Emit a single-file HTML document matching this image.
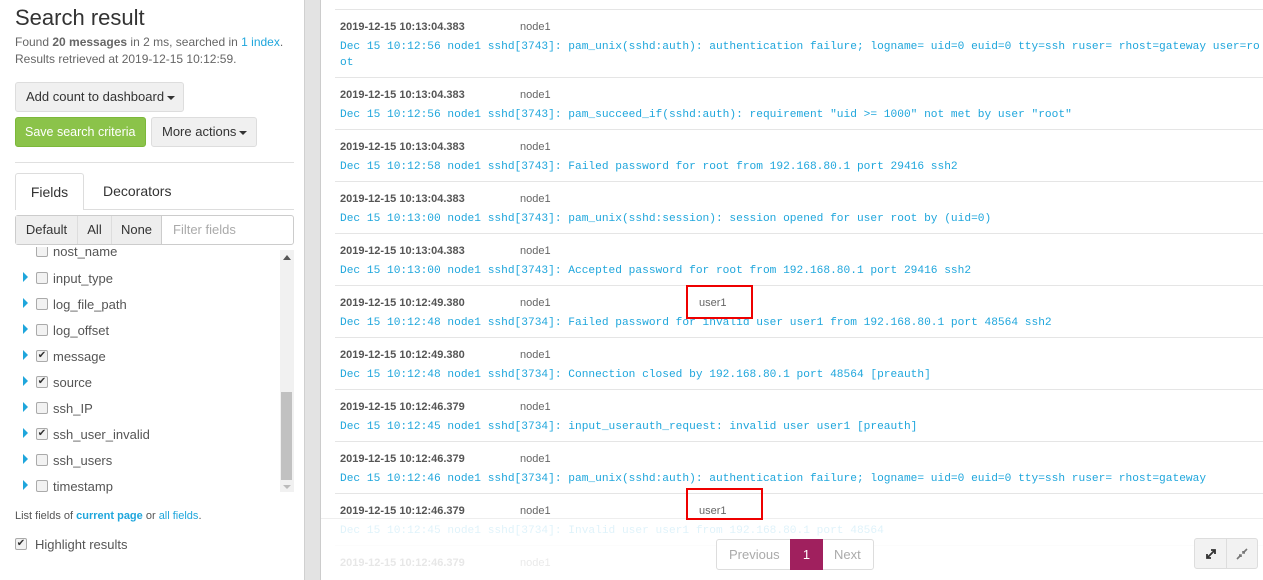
<!DOCTYPE html>
<html style="width:1263px;height:580px;overflow:hidden"><head><meta charset="utf-8"><style>
*{box-sizing:border-box;margin:0;padding:0}
body{width:1263px;height:580px;overflow:hidden;background:#e3e3e3;font-family:"Liberation Sans",sans-serif;color:#666;position:relative}
#left{position:absolute;left:0;top:0;width:305px;height:580px;background:#fff;border-right:1px solid #d0d0d0}
#right{position:absolute;left:320px;top:0;width:943px;height:580px;background:#fff;border-left:1px solid #ccc;overflow:hidden}
.a{position:absolute}
h1{position:absolute;left:15px;top:5px;font-size:22px;font-weight:normal;color:#333}
.btn{position:absolute;border:1px solid #ddd;background:#f0f0f0;border-radius:3px;font-size:13px;color:#333;padding:0 10px;line-height:28px;height:30px;white-space:nowrap}
.car{display:inline-block;border-top:4px solid #333;border-left:4px solid transparent;border-right:4px solid transparent;vertical-align:middle;margin-left:3px}
.fld{position:absolute;left:0;font-size:13px;color:#555}
.tri{position:absolute;left:23px;width:0;height:0;border-left:5px solid #1fa6dc;border-top:5px solid transparent;border-bottom:5px solid transparent}
.cb{position:absolute;left:36px;width:12px;height:12px;border:1px solid #aaa;border-radius:2px;background:#f2f2f2;font-size:10px;line-height:10px;color:#333;text-align:center}
.nm{position:absolute;left:53px;white-space:nowrap}
.row{position:absolute;left:14px;width:929px;border-top:1px solid #e5e5e5}
.ts{position:absolute;left:5px;font-size:11px;font-weight:bold;color:#555}
.nd{position:absolute;left:185px;font-size:11px;color:#666}
.msg{position:absolute;left:5px;font-family:"Liberation Mono",monospace;font-size:11.2px;color:#1fa6dc;line-height:16px;white-space:pre}
.red{position:absolute;border:2px solid #e00}
</style></head><body>
<div id="left">
<h1>Search result</h1>
<div class="a" style="left:15px;top:34px;font-size:12px;line-height:17px;white-space:nowrap">Found <b>20 messages</b> in 2 ms, searched in <span style="color:#1fa6dc">1 index</span>.<br>Results retrieved at 2019-12-15 10:12:59.</div>
<div class="btn" style="left:15px;top:82px;width:169px">Add count to dashboard<span class="car"></span></div>
<div class="btn" style="left:15px;top:117px;width:131px;background:#8bc34a;border-color:#7cb83a;color:#fff;font-size:12.5px;padding:0 9px">Save search criteria</div>
<div class="btn" style="left:151px;top:117px;width:106px">More actions<span class="car"></span></div>
<div class="a" style="left:15px;top:162px;width:279px;border-top:1px solid #e0e0e0"></div>
<div class="a" style="left:15px;top:173px;width:69px;height:37px;border:1px solid #ddd;border-bottom:none;background:#fff;border-radius:3px 3px 0 0;font-size:14px;color:#333;text-align:center;line-height:36px">Fields</div>
<div class="a" style="left:103px;top:183px;font-size:14px;color:#333">Decorators</div>
<div class="a" style="left:84px;top:209px;width:210px;border-top:1px solid #ddd"></div>
<div class="a" style="left:15px;top:215px;width:279px;height:30px;border:1px solid #ccc;border-radius:3px;background:#fff;font-size:13px;line-height:28px;color:#333">
<span class="a" style="left:0;top:0;width:62px;height:28px;background:#eee;border-right:1px solid #ddd;text-align:center">Default</span>
<span class="a" style="left:62px;top:0;width:34px;height:28px;background:#eee;border-right:1px solid #ddd;text-align:center">All</span>
<span class="a" style="left:96px;top:0;width:50px;height:28px;background:#eee;border-right:1px solid #ccc;text-align:center">None</span>
<span class="a" style="left:157px;top:0;color:#aaa">Filter fields</span></div>
<div class="a" style="left:0;top:247px;width:294px;height:248px;overflow:hidden">
<div class="fld" style="top:-2px;width:280px;height:16px"><span class="cb" style="top:0px"></span><span class="nm" style="top:-1px">nost_name</span></div>
<div class="fld" style="top:24px"><i class="tri" style="top:1px"></i><span class="cb" style="top:1px"></span><span class="nm" style="top:0">input_type</span></div>
<div class="fld" style="top:50px"><i class="tri" style="top:1px"></i><span class="cb" style="top:1px"></span><span class="nm" style="top:0">log_file_path</span></div>
<div class="fld" style="top:76px"><i class="tri" style="top:1px"></i><span class="cb" style="top:1px"></span><span class="nm" style="top:0">log_offset</span></div>
<div class="fld" style="top:102px"><i class="tri" style="top:1px"></i><span class="cb" style="top:1px">✔</span><span class="nm" style="top:0">message</span></div>
<div class="fld" style="top:128px"><i class="tri" style="top:1px"></i><span class="cb" style="top:1px">✔</span><span class="nm" style="top:0">source</span></div>
<div class="fld" style="top:154px"><i class="tri" style="top:1px"></i><span class="cb" style="top:1px"></span><span class="nm" style="top:0">ssh_IP</span></div>
<div class="fld" style="top:180px"><i class="tri" style="top:1px"></i><span class="cb" style="top:1px">✔</span><span class="nm" style="top:0">ssh_user_invalid</span></div>
<div class="fld" style="top:206px"><i class="tri" style="top:1px"></i><span class="cb" style="top:1px"></span><span class="nm" style="top:0">ssh_users</span></div>
<div class="fld" style="top:232px"><i class="tri" style="top:1px"></i><span class="cb" style="top:1px"></span><span class="nm" style="top:0">timestamp</span></div>
<div class="a" style="left:280px;top:3px;width:14px;height:242px;background:#f1f1f1"></div>
<div class="a" style="left:281px;top:145px;width:11px;height:88px;background:#c1c1c1"></div>
<div class="a" style="left:283px;top:8px;border-bottom:5px solid #555;border-left:4px solid transparent;border-right:4px solid transparent"></div>
<div class="a" style="left:283px;top:238px;border-top:4px solid #bbb;border-left:4px solid transparent;border-right:4px solid transparent"></div>
</div>
<div class="a" style="left:15px;top:510px;font-size:11px;color:#555;white-space:nowrap">List fields of <b style="color:#1fa6dc">current page</b> or <span style="color:#1fa6dc">all fields</span>.</div>
<div class="cb" style="left:15px;top:538px">✔</div>
<div class="a" style="left:35px;top:537px;font-size:13px;color:#555">Highlight results</div>
</div>
<div id="right">
<div class="row" style="top:9px;height:68px"><span class="ts" style="top:11px">2019-12-15 10:13:04.383</span><span class="nd" style="top:11px">node1</span><span class="msg" style="top:29px">Dec 15 10:12:56 node1 sshd[3743]: pam_unix(sshd:auth): authentication failure; logname= uid=0 euid=0 tty=ssh ruser= rhost=gateway user=ro
ot</span></div>
<div class="row" style="top:77px;height:52px"><span class="ts" style="top:11px">2019-12-15 10:13:04.383</span><span class="nd" style="top:11px">node1</span><span class="msg" style="top:29px">Dec 15 10:12:56 node1 sshd[3743]: pam_succeed_if(sshd:auth): requirement "uid >= 1000" not met by user "root"</span></div>
<div class="row" style="top:129px;height:52px"><span class="ts" style="top:11px">2019-12-15 10:13:04.383</span><span class="nd" style="top:11px">node1</span><span class="msg" style="top:29px">Dec 15 10:12:58 node1 sshd[3743]: Failed password for root from 192.168.80.1 port 29416 ssh2</span></div>
<div class="row" style="top:181px;height:52px"><span class="ts" style="top:11px">2019-12-15 10:13:04.383</span><span class="nd" style="top:11px">node1</span><span class="msg" style="top:29px">Dec 15 10:13:00 node1 sshd[3743]: pam_unix(sshd:session): session opened for user root by (uid=0)</span></div>
<div class="row" style="top:233px;height:52px"><span class="ts" style="top:11px">2019-12-15 10:13:04.383</span><span class="nd" style="top:11px">node1</span><span class="msg" style="top:29px">Dec 15 10:13:00 node1 sshd[3743]: Accepted password for root from 192.168.80.1 port 29416 ssh2</span></div>
<div class="row" style="top:285px;height:52px"><span class="ts" style="top:11px">2019-12-15 10:12:49.380</span><span class="nd" style="top:11px">node1</span><span class="nd" style="top:11px;left:364px">user1</span><span class="msg" style="top:29px">Dec 15 10:12:48 node1 sshd[3734]: Failed password for invalid user user1 from 192.168.80.1 port 48564 ssh2</span></div>
<div class="row" style="top:337px;height:52px"><span class="ts" style="top:11px">2019-12-15 10:12:49.380</span><span class="nd" style="top:11px">node1</span><span class="msg" style="top:29px">Dec 15 10:12:48 node1 sshd[3734]: Connection closed by 192.168.80.1 port 48564 [preauth]</span></div>
<div class="row" style="top:389px;height:52px"><span class="ts" style="top:11px">2019-12-15 10:12:46.379</span><span class="nd" style="top:11px">node1</span><span class="msg" style="top:29px">Dec 15 10:12:45 node1 sshd[3734]: input_userauth_request: invalid user user1 [preauth]</span></div>
<div class="row" style="top:441px;height:52px"><span class="ts" style="top:11px">2019-12-15 10:12:46.379</span><span class="nd" style="top:11px">node1</span><span class="msg" style="top:29px">Dec 15 10:12:46 node1 sshd[3734]: pam_unix(sshd:auth): authentication failure; logname= uid=0 euid=0 tty=ssh ruser= rhost=gateway</span></div>
<div class="row" style="top:493px;height:52px"><span class="ts" style="top:11px">2019-12-15 10:12:46.379</span><span class="nd" style="top:11px">node1</span><span class="nd" style="top:11px;left:364px">user1</span><span class="msg" style="top:29px">Dec 15 10:12:45 node1 sshd[3734]: Invalid user user1 from 192.168.80.1 port 48564</span></div>
<div class="row" style="top:545px;height:35px"><span class="ts" style="top:11px">2019-12-15 10:12:46.379</span><span class="nd" style="top:11px">node1</span></div>
<div class="a" style="left:0;top:518px;width:943px;height:62px;background:rgba(255,255,255,0.86);border-top:1px solid #eee"></div>
<div class="a" style="left:395px;top:539px;width:158px;height:31px;border:1px solid #ddd;border-radius:3px;background:#fff;font-size:13px;line-height:29px;color:#aaa">
<span class="a" style="left:12px">Previous</span>
<span class="a" style="left:73px;top:-1px;width:33px;height:31px;background:#a0205e;color:#fff;text-align:center;line-height:31px">1</span>
<span class="a" style="left:117px">Next</span></div>
<div class="a" style="left:873px;top:538px;width:64px;height:31px;border:1px solid #ddd;border-radius:3px;background:#f2f2f2">
<span class="a" style="left:31px;top:0;height:29px;border-left:1px solid #ddd"></span>
<svg class="a" style="left:9px;top:8px" width="14" height="14" viewBox="0 0 14 14"><path d="M3 11L11 3M7 3h4v4M3 7v4h4" stroke="#333" stroke-width="1.8" fill="none"/></svg>
<svg class="a" style="left:40px;top:8px" width="14" height="14" viewBox="0 0 14 14"><path d="M2 12L6 8M8 6L12 2M4 8h2v2M10 6H8V4" stroke="#777" stroke-width="1.6" fill="none"/></svg>
</div>
</div>
<div class="red" style="left:686px;top:285px;width:67px;height:34px"></div>
<div class="red" style="left:686px;top:488px;width:77px;height:32px"></div>
</body></html>
